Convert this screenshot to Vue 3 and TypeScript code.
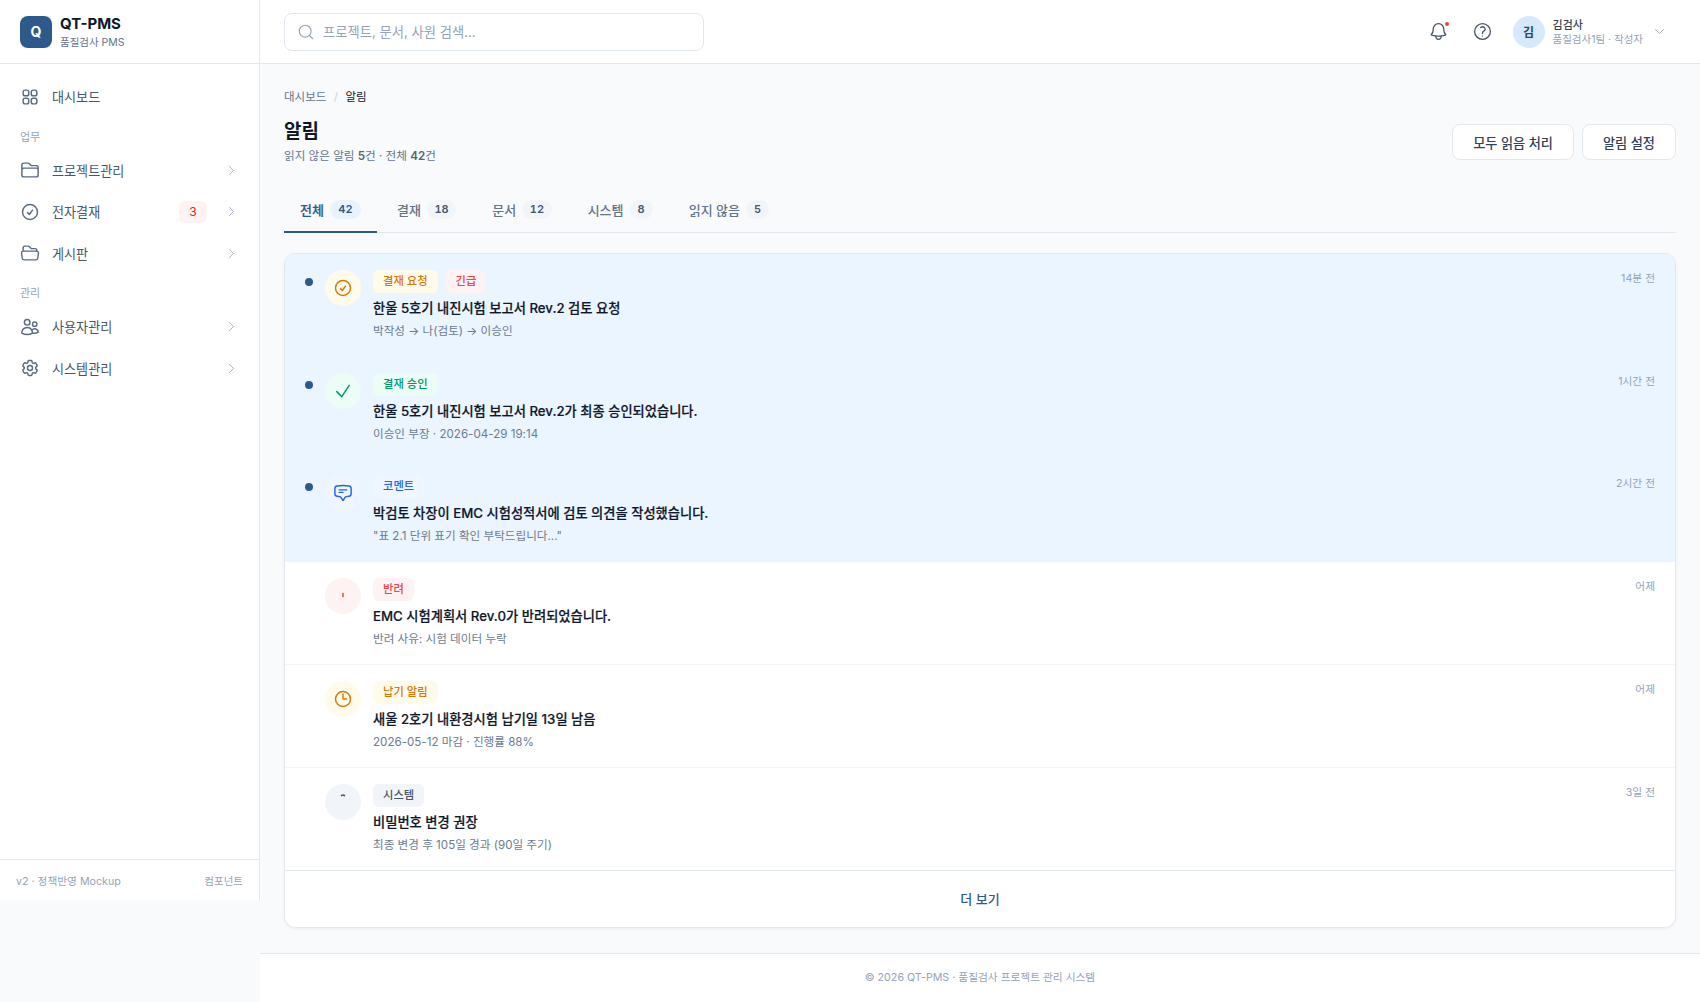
<script setup lang="ts">
import { ref } from 'vue'

interface NavItem {
  label: string
  icon: string
  badge?: number
  arrow?: boolean
}

interface Notice {
  tone: string
  icon: string
  tags: { text: string; tone: string }[]
  title: string
  meta: string
  time: string
  unread: boolean
}

// heroicons outline paths
const icons: Record<string, string> = {
  grid: 'M3.75 6A2.25 2.25 0 016 3.75h2.25A2.25 2.25 0 0110.5 6v2.25a2.25 2.25 0 01-2.25 2.25H6a2.25 2.25 0 01-2.25-2.25V6zM3.75 15.75A2.25 2.25 0 016 13.5h2.25a2.25 2.25 0 012.25 2.25V18a2.25 2.25 0 01-2.25 2.25H6A2.25 2.25 0 013.75 18v-2.25zM13.5 6a2.25 2.25 0 012.25-2.25H18A2.25 2.25 0 0120.25 6v2.25A2.25 2.25 0 0118 10.5h-2.25a2.25 2.25 0 01-2.25-2.25V6zM13.5 15.75a2.25 2.25 0 012.25-2.25H18a2.25 2.25 0 012.25 2.25V18A2.25 2.25 0 0118 20.25h-2.25A2.25 2.25 0 0113.5 18v-2.25z',
  folder: 'M2.25 12.75V12A2.25 2.25 0 014.5 9.75h15A2.25 2.25 0 0121.75 12v.75m-8.69-6.44l-2.12-2.12a1.5 1.5 0 00-1.061-.44H4.5A2.25 2.25 0 002.25 6v12a2.25 2.25 0 002.25 2.25h15A2.25 2.25 0 0021.75 18V9a2.25 2.25 0 00-2.25-2.25h-5.379a1.5 1.5 0 01-1.06-.44z',
  checkCircle: 'M9 12.75L11.25 15 15 9.75M21 12a9 9 0 11-18 0 9 9 0 0118 0z',
  folderOpen: 'M3.75 9.776c.112-.017.227-.026.344-.026h15.812c.117 0 .232.009.344.026m-16.5 0a2.25 2.25 0 00-1.883 2.542l.857 6a2.25 2.25 0 002.227 1.932H19.05a2.25 2.25 0 002.227-1.932l.857-6a2.25 2.25 0 00-1.883-2.542m-16.5 0V6A2.25 2.25 0 016 3.75h3.879a1.5 1.5 0 011.06.44l2.122 2.12a1.5 1.5 0 001.06.44H18A2.25 2.25 0 0120.25 9v.776',
  users: 'M15 19.128a9.38 9.38 0 002.625.372 9.337 9.337 0 004.121-.952 4.125 4.125 0 00-7.533-2.493M15 19.128v-.003c0-1.113-.285-2.16-.786-3.07M15 19.128v.106A12.318 12.318 0 018.624 21c-2.331 0-4.512-.645-6.374-1.766l-.001-.109a6.375 6.375 0 0111.964-3.07M12 6.375a3.375 3.375 0 11-6.75 0 3.375 3.375 0 016.75 0zm8.25 2.25a2.625 2.625 0 11-5.25 0 2.625 2.625 0 015.25 0z',
  cog: 'M9.594 3.94c.09-.542.56-.94 1.11-.94h2.593c.55 0 1.02.398 1.11.94l.213 1.281c.063.374.313.686.645.87.074.04.147.083.22.127.324.196.72.257 1.075.124l1.217-.456a1.125 1.125 0 011.37.49l1.296 2.247a1.125 1.125 0 01-.26 1.431l-1.003.827c-.293.24-.438.613-.431.992a6.759 6.759 0 010 .255c-.007.378.138.75.43.99l1.005.828c.424.35.534.954.26 1.43l-1.298 2.247a1.125 1.125 0 01-1.369.491l-1.217-.456c-.355-.133-.75-.072-1.076.124a6.57 6.57 0 01-.22.128c-.331.183-.581.495-.644.869l-.213 1.28c-.09.543-.56.941-1.11.941h-2.594c-.55 0-1.02-.398-1.11-.94l-.213-1.281c-.062-.374-.312-.686-.644-.87a6.52 6.52 0 01-.22-.127c-.325-.196-.72-.257-1.076-.124l-1.217.456a1.125 1.125 0 01-1.369-.49l-1.297-2.247a1.125 1.125 0 01.26-1.431l1.004-.827c.292-.24.437-.613.43-.992a6.932 6.932 0 010-.255c.007-.378-.138-.75-.43-.99l-1.004-.828a1.125 1.125 0 01-.26-1.43l1.297-2.247a1.125 1.125 0 011.37-.491l1.216.456c.356.133.751.072 1.076-.124.072-.044.146-.087.22-.128.332-.183.582-.495.644-.869l.214-1.281zM15 12a3 3 0 11-6 0 3 3 0 016 0z',
  chevronRight: 'M8.25 4.5l7.5 7.5-7.5 7.5',
  chevronDown: 'M19.5 8.25l-7.5 7.5-7.5-7.5',
  search: 'M21 21l-4.35-4.35M18.75 10.875a7.875 7.875 0 11-15.75 0 7.875 7.875 0 0115.75 0z',
  bell: 'M14.857 17.082a23.848 23.848 0 005.454-1.31A8.967 8.967 0 0118 9.75v-.7V9A6 6 0 006 9v.75a8.967 8.967 0 01-2.312 6.022c1.733.64 3.56 1.085 5.455 1.31m5.714 0a24.255 24.255 0 01-5.714 0m5.714 0a3 3 0 11-5.714 0',
  help: 'M9.879 7.519c1.171-1.025 3.071-1.025 4.242 0 1.172 1.025 1.172 2.687 0 3.712-.203.179-.43.326-.67.442-.745.361-1.45.999-1.45 1.827v.75M21 12a9 9 0 11-18 0 9 9 0 0118 0zm-9 5.25h.008v.008H12v-.008z',
  check: 'M4.5 12.75l6 6 9-13.5',
  chat: 'M7.5 8.25h9m-9 3H12m-9.75 1.51c0 1.6 1.123 2.994 2.707 3.227 1.129.166 2.27.293 3.423.379.35.026.67.21.865.501L12 21l2.755-4.133a1.14 1.14 0 01.865-.501 48.172 48.172 0 003.423-.379c1.584-.233 2.707-1.626 2.707-3.228V6.741c0-1.602-1.123-2.995-2.707-3.228A48.394 48.394 0 0012 3c-2.392 0-4.744.175-7.043.513C3.373 3.746 2.25 5.14 2.25 6.741v6.018z',
  clock: 'M12 6v6h4.5m4.5 0a9 9 0 11-18 0 9 9 0 0118 0z',
  // these two only show a small stub in the reference
  stub: 'M12 9v3.75',
  arc: 'M10.2 4.4Q12 3 13.8 4.4',
}

const dashboard: NavItem = { label: '대시보드', icon: 'grid' }
const workNav: NavItem[] = [
  { label: '프로젝트관리', icon: 'folder', arrow: true },
  { label: '전자결재', icon: 'checkCircle', badge: 3, arrow: true },
  { label: '게시판', icon: 'folderOpen', arrow: true },
]
const adminNav: NavItem[] = [
  { label: '사용자관리', icon: 'users', arrow: true },
  { label: '시스템관리', icon: 'cog', arrow: true },
]

const tabs = [
  { label: '전체', count: 42 },
  { label: '결재', count: 18 },
  { label: '문서', count: 12 },
  { label: '시스템', count: 8 },
  { label: '읽지 않음', count: 5 },
]
const activeTab = ref(0)

const notices: Notice[] = [
  {
    tone: 'amber',
    icon: 'checkCircle',
    tags: [
      { text: '결재 요청', tone: 'amber' },
      { text: '긴급', tone: 'red' },
    ],
    title: '한울 5호기 내진시험 보고서 Rev.2 검토 요청',
    meta: '박작성 → 나(검토) → 이승인',
    time: '14분 전',
    unread: true,
  },
  {
    tone: 'green',
    icon: 'check',
    tags: [{ text: '결재 승인', tone: 'green' }],
    title: '한울 5호기 내진시험 보고서 Rev.2가 최종 승인되었습니다.',
    meta: '이승인 부장 · 2026-04-29 19:14',
    time: '1시간 전',
    unread: true,
  },
  {
    tone: 'blue',
    icon: 'chat',
    tags: [{ text: '코멘트', tone: 'blue' }],
    title: '박검토 차장이 EMC 시험성적서에 검토 의견을 작성했습니다.',
    meta: '"표 2.1 단위 표기 확인 부탁드립니다..."',
    time: '2시간 전',
    unread: true,
  },
  {
    tone: 'red',
    icon: 'stub',
    tags: [{ text: '반려', tone: 'red' }],
    title: 'EMC 시험계획서 Rev.0가 반려되었습니다.',
    meta: '반려 사유: 시험 데이터 누락',
    time: '어제',
    unread: false,
  },
  {
    tone: 'amber',
    icon: 'clock',
    tags: [{ text: '납기 알림', tone: 'amber' }],
    title: '새울 2호기 내환경시험 납기일 13일 남음',
    meta: '2026-05-12 마감 · 진행률 88%',
    time: '어제',
    unread: false,
  },
  {
    tone: 'slate',
    icon: 'arc',
    tags: [{ text: '시스템', tone: 'slate' }],
    title: '비밀번호 변경 권장',
    meta: '최종 변경 후 105일 경과 (90일 주기)',
    time: '3일 전',
    unread: false,
  },
]
</script>

<template>
  <div class="app">
    <aside class="sidebar">
      <div class="brand">
        <div class="logo">Q</div>
        <div>
          <div class="brandName">QT-PMS</div>
          <div class="brandSub">품질검사 PMS</div>
        </div>
      </div>

      <nav class="nav">
        <a class="navItem">
          <svg class="navIcon" viewBox="0 0 24 24"><path :d="icons[dashboard.icon]" /></svg>
          <span class="navLabel">{{ dashboard.label }}</span>
        </a>

        <div class="navSection">업무</div>
        <a v-for="item in workNav" :key="item.label" class="navItem">
          <svg class="navIcon" viewBox="0 0 24 24"><path :d="icons[item.icon]" /></svg>
          <span class="navLabel">{{ item.label }}</span>
          <span v-if="item.badge" class="navBadge">{{ item.badge }}</span>
          <svg class="navArrow" viewBox="0 0 24 24"><path :d="icons.chevronRight" /></svg>
        </a>

        <div class="navSection">관리</div>
        <a v-for="item in adminNav" :key="item.label" class="navItem">
          <svg class="navIcon" viewBox="0 0 24 24"><path :d="icons[item.icon]" /></svg>
          <span class="navLabel">{{ item.label }}</span>
          <svg class="navArrow" viewBox="0 0 24 24"><path :d="icons.chevronRight" /></svg>
        </a>
      </nav>

      <div class="sideFooter">
        <span class="sideVersion">v2 · 정책반영 Mockup</span>
        <span>컴포넌트</span>
      </div>
    </aside>

    <div class="main">
      <header class="topbar">
        <div class="search">
          <svg class="searchIcon" viewBox="0 0 24 24"><path :d="icons.search" /></svg>
          <span>프로젝트, 문서, 사원 검색...</span>
        </div>
        <div class="topRight">
          <button class="iconBtn bellBtn">
            <svg viewBox="0 0 24 24"><path :d="icons.bell" /></svg>
            <span class="redDot"></span>
          </button>
          <button class="iconBtn">
            <svg viewBox="0 0 24 24"><path :d="icons.help" /></svg>
          </button>
          <div class="user">
            <div class="avatar">김</div>
            <div class="userText">
              <div class="userName">김검사</div>
              <div class="userRole">품질검사1팀 · 작성자</div>
            </div>
            <svg class="userArrow" viewBox="0 0 24 24"><path :d="icons.chevronDown" /></svg>
          </div>
        </div>
      </header>

      <main class="content">
        <div class="crumbs">
          <span>대시보드</span>
          <span class="crumbSep">/</span>
          <span class="crumbNow">알림</span>
        </div>

        <div class="pageHead">
          <div>
            <h1>알림</h1>
            <p>읽지 않은 알림 <b>5</b>건 · 전체 <b>42</b>건</p>
          </div>
          <div class="pageActions">
            <button class="btn">모두 읽음 처리</button>
            <button class="btn">알림 설정</button>
          </div>
        </div>

        <div class="tabs">
          <button
            v-for="(tab, index) in tabs"
            :key="tab.label"
            class="tab"
            :class="{ active: index === activeTab }"
            @click="activeTab = index"
          >
            {{ tab.label }}
            <span class="tabCount">{{ tab.count }}</span>
          </button>
        </div>

        <section class="card">
          <article
            v-for="notice in notices"
            :key="notice.title"
            class="row"
            :class="{ unread: notice.unread }"
          >
            <span class="dot"></span>
            <span class="rowIcon" :class="notice.tone">
              <svg viewBox="0 0 24 24"><path :d="icons[notice.icon]" /></svg>
            </span>
            <div class="rowBody">
              <div class="tags">
                <span v-for="tag in notice.tags" :key="tag.text" class="tag" :class="tag.tone">{{ tag.text }}</span>
              </div>
              <div class="rowTitle">{{ notice.title }}</div>
              <div class="rowMeta">{{ notice.meta }}</div>
            </div>
            <span class="rowTime">{{ notice.time }}</span>
          </article>
          <button class="more">더 보기</button>
        </section>
      </main>

      <footer class="footer">© 2026 QT-PMS · 품질검사 프로젝트 관리 시스템</footer>
    </div>
  </div>
</template>

<style>
body {
  margin: 0;
  background: #f8fafc;
}
</style>

<style scoped>
.app {
  display: flex;
  align-items: flex-start;
  font-family: Inter, "Noto Sans CJK KR", sans-serif;
  color: #0f172a;
}

svg {
  fill: none;
  stroke: currentColor;
  stroke-width: 1.5;
  stroke-linecap: round;
  stroke-linejoin: round;
}

button {
  font-family: inherit;
  border: 0;
  background: none;
  padding: 0;
}

/* Sidebar */
.sidebar {
  width: 260px;
  height: 900px;
  box-sizing: border-box;
  flex-shrink: 0;
  display: flex;
  flex-direction: column;
  background: #fff;
  border-right: 1px solid #e2e8f0;
}

.brand {
  height: 64px;
  box-sizing: border-box;
  display: flex;
  align-items: center;
  gap: 8px;
  padding: 0 20px;
  border-bottom: 1px solid #e2e8f0;
}

.logo {
  width: 32px;
  height: 32px;
  border-radius: 8px;
  background: #2c5a8c;
  color: #fff;
  font-size: 14px;
  font-weight: 700;
  display: flex;
  align-items: center;
  justify-content: center;
}

.brandName {
  margin-top: 2px;
  font-size: 15px;
  font-weight: 700;
  line-height: 20px;
}

.brandSub {
  margin-top: 1px;
  font-size: 10.5px;
  line-height: 16px;
  color: #64748b;
}

.nav {
  flex: 1;
  padding: 12px 12px 0;
}

.navItem {
  display: flex;
  align-items: center;
  height: 41.5px;
  padding: 0 8px;
  font-size: 13.1px;
  color: #475569;
}

.navIcon {
  width: 20px;
  height: 20px;
  margin-right: 12px;
  color: #5b6b82;
  stroke-width: 1.75;
}

.navLabel {
  flex: 1;
}

.navBadge {
  width: 28px;
  height: 22px;
  margin-right: 18px;
  border-radius: 6px;
  background: #fef2f2;
  color: #dc2626;
  font-size: 12px;
  line-height: 22px;
  text-align: center;
}

.navArrow {
  width: 13px;
  height: 13px;
  margin-right: 1px;
  color: #94a3b8;
}

.navSection {
  font-size: 11px;
  line-height: 16px;
  color: #94a3b8;
  padding: 11px 8px 5px;
}

.sideFooter {
  height: 41px;
  box-sizing: border-box;
  display: flex;
  align-items: center;
  justify-content: space-between;
  padding: 0 16px;
  border-top: 1px solid #e2e8f0;
  font-size: 10.5px;
  color: #94a3b8;
}

.sideVersion {
  font-size: 10.7px;
}

/* Top bar */
.main {
  flex: 1;
  min-width: 0;
  min-height: 1002px;
  display: flex;
  flex-direction: column;
}

.topbar {
  height: 64px;
  box-sizing: border-box;
  display: flex;
  align-items: center;
  justify-content: space-between;
  padding: 0 24px;
  background: #fff;
  border-bottom: 1px solid #e2e8f0;
}

.search {
  width: 420px;
  height: 38px;
  box-sizing: border-box;
  display: flex;
  align-items: center;
  gap: 8px;
  padding: 0 12px;
  border: 1px solid #e2e8f0;
  border-radius: 8px;
  font-size: 13.3px;
  color: #94a3b8;
}

.searchIcon {
  width: 18px;
  height: 18px;
}

.topRight {
  display: flex;
  align-items: center;
}

.iconBtn {
  position: relative;
  width: 32px;
  height: 32px;
  margin-right: 14px;
  display: flex;
  align-items: center;
  justify-content: center;
  color: #475569;
}

.bellBtn {
  margin-right: 12px;
}

.iconBtn svg {
  width: 21px;
  height: 21px;
}

.redDot {
  position: absolute;
  top: 6px;
  right: 6px;
  width: 4px;
  height: 4px;
  border-radius: 50%;
  background: #ef4444;
}

.user {
  display: flex;
  align-items: center;
  gap: 8px;
  margin-right: 10.5px;
}

.avatar {
  width: 32px;
  height: 32px;
  border-radius: 50%;
  background: #d6e8fb;
  color: #1e4a78;
  font-size: 12px;
  font-weight: 600;
  display: flex;
  align-items: center;
  justify-content: center;
}

.userText {
  padding-top: 1px;
}

.userName {
  font-size: 11px;
  line-height: 15px;
  font-weight: 500;
  color: #334155;
}

.userRole {
  font-size: 10.5px;
  line-height: 13px;
  color: #94a3b8;
}

.userArrow {
  width: 13px;
  height: 13px;
  margin-left: 1.5px;
  color: #94a3b8;
}

/* Page */
.content {
  flex: 1;
  padding: 24px 24px 24px;
}

.crumbs {
  display: flex;
  align-items: center;
  gap: 7.5px;
  font-size: 11.5px;
  line-height: 18px;
  color: #64748b;
}

.crumbSep {
  color: #cbd5e1;
}

.crumbNow {
  color: #0f172a;
}

.pageHead {
  display: flex;
  align-items: flex-end;
  justify-content: space-between;
  margin-top: 12px;
}

h1 {
  margin: 0;
  font-size: 19px;
  line-height: 28px;
  font-weight: 600;
}

.pageHead p {
  margin: 2px 0 0;
  font-size: 11.6px;
  line-height: 16px;
  color: #64748b;
}

.pageHead b {
  font-weight: 600;
  color: #556479;
}

.pageActions {
  display: flex;
  gap: 8px;
  margin-bottom: 4px;
}

.btn {
  height: 36px;
  padding: 0 20px;
  box-sizing: border-box;
  background: #fff;
  border: 1px solid #e2e8f0;
  border-radius: 8px;
  font-size: 13.2px;
  font-weight: 500;
  color: #334155;
}

/* Tabs */
.tabs {
  display: flex;
  gap: 4px;
  margin-top: 24px;
  border-bottom: 1px solid #e2e8f0;
}

.tab {
  display: flex;
  align-items: center;
  gap: 6px;
  height: 45px;
  padding: 0 16px;
  margin-bottom: -1px;
  border-bottom: 2px solid transparent;
  font-size: 13px;
  font-weight: 500;
  color: #64748b;
}

.tab.active {
  color: #2c5a8c;
  border-bottom-color: #2c5a8c;
  -webkit-text-stroke: 0.2px #2c5a8c;
}

.tabCount {
  min-width: 8px;
  height: 19px;
  padding: 0 7.6px;
  border-radius: 10px;
  background: #f1f5f9;
  font-size: 11px;
  line-height: 19px;
  font-weight: 600;
  font-variant-numeric: tabular-nums;
  color: #475569;
  -webkit-text-stroke: 0;
}

.tab.active .tabCount {
  padding: 0 8.4px;
  background: #e8f3ff;
  color: #2c5a8c;
}

/* Notification list */
.card {
  margin-top: 20px;
  background: #fff;
  border: 1px solid #e2e8f0;
  border-radius: 12px;
  box-shadow: 0 1px 3px rgba(15, 23, 42, 0.06);
  overflow: hidden;
}

.row {
  display: flex;
  align-items: flex-start;
  height: 103px;
  box-sizing: border-box;
  padding: 16px 20px;
  border-bottom: 1px solid #f1f5f9;
}

.row.unread {
  height: 102.6px;
  background: #ebf5ff;
  border-bottom-color: #eaf3fd;
}

.dot {
  width: 8px;
  height: 8px;
  margin-top: 8px;
  margin-right: 12px;
  border-radius: 50%;
  flex-shrink: 0;
}

.unread .dot {
  background: #2c5a8c;
}

.rowIcon {
  width: 36px;
  height: 36px;
  margin-right: 12px;
  border-radius: 50%;
  flex-shrink: 0;
  display: flex;
  align-items: center;
  justify-content: center;
}

.rowIcon svg {
  width: 20px;
  height: 20px;
  stroke-width: 1.75;
}

.rowBody {
  flex: 1;
  min-width: 0;
}

.tags {
  display: flex;
  gap: 8px;
}

.tag {
  height: 23px;
  padding: 0 10px;
  border-radius: 6px;
  font-size: 11.3px;
  line-height: 23px;
  font-weight: 500;
}

.amber {
  background: #fffbeb;
  color: #d97706;
}

.red {
  background: #fef2f2;
  color: #ef4444;
}

.green {
  background: #ecfdf5;
  color: #059669;
}

.blue {
  background: #eff6ff;
  color: #2563eb;
}

.slate {
  background: #f1f5f9;
  color: #475569;
}

.rowTitle {
  margin-top: 4px;
  font-size: 13.25px;
  line-height: 22px;
  font-weight: 500;
  -webkit-text-stroke: 0.2px #0f172a;
  color: #0f172a;
}

.rowMeta {
  margin-top: 3px;
  font-size: 11.6px;
  line-height: 18px;
  color: #6b7b91;
}

.rowTime {
  margin-top: 1px;
  font-size: 10.7px;
  line-height: 16px;
  color: #94a3b8;
}

.more {
  display: block;
  width: 100%;
  height: 57px;
  border-top: 1px solid #e2e8f0;
  margin-top: -1px;
  position: relative;
  background: #fff;
  font-size: 13px;
  font-weight: 500;
  color: #2c5a8c;
}

/* Footer */
.footer {
  height: 49px;
  box-sizing: border-box;
  background: #fff;
  border-top: 1px solid #e2e8f0;
  font-size: 10.7px;
  line-height: 48px;
  text-align: center;
  color: #94a3b8;
}
</style>
